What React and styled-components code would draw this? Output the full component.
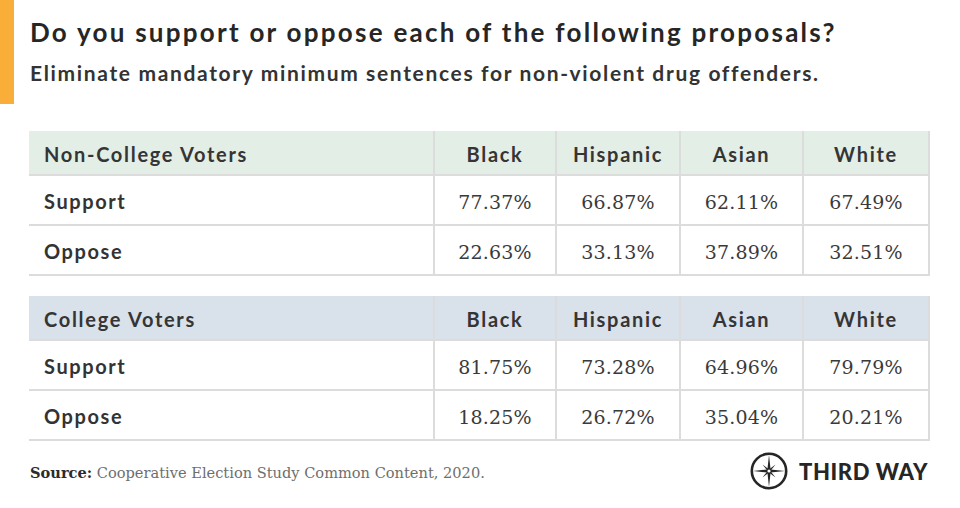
import React from "react";
import styled, { createGlobalStyle } from "styled-components";

const GlobalStyle = createGlobalStyle`
  html, body {
    margin: 0;
    padding: 0;
    background: #ffffff;
  }
  body {
    font-family: "Lato", "Liberation Sans", sans-serif;
    color: #2e2e2e;
  }
`;

const Page = styled.div`
  width: 960px;
  height: 508px;
  overflow: hidden;
  background: #ffffff;
`;

const Header = styled.header`
  display: flex;
  height: 104px;
`;

const Accent = styled.div`
  width: 14px;
  height: 104px;
  background: #f9ae3a;
  flex-shrink: 0;
`;

const Titles = styled.div`
  display: flex;
  flex-direction: column;
  padding: 17px 0 0 16px;
`;

const Title = styled.h1`
  margin: 0;
  font-size: 26px;
  line-height: 30px;
  font-weight: 700;
  letter-spacing: 2.25px;
  color: #262626;
  white-space: nowrap;
`;

const Subtitle = styled.h2`
  margin: 14px 0 0;
  font-size: 21px;
  line-height: 24px;
  font-weight: 700;
  letter-spacing: 1.65px;
  color: #333333;
  white-space: nowrap;
`;

const Content = styled.div`
  display: flex;
  flex-direction: column;
  gap: 20px;
  padding: 27px 30px 0 29px;
`;

const Table = styled.div`
  display: grid;
  grid-template-columns: 404px 122px 124px 123px 128px;
  grid-template-rows: 45px 50px 50px;
`;

const Cell = styled.div`
  display: flex;
  align-items: center;
  justify-content: ${(p) => (p.$first ? "flex-start" : "center")};
  padding-left: ${(p) => (p.$first ? "15px" : "0")};
  box-sizing: border-box;
  border-bottom: 2px solid #dcdcdc;
  border-left: ${(p) => (p.$first ? "none" : "2px solid #dcdcdc")};
  border-right: ${(p) => (p.$last ? "2px solid #dcdcdc" : "none")};
  background: ${(p) => p.$bg || "#ffffff"};
`;

const HeadText = styled.span`
  font-size: 20px;
  font-weight: 700;
  letter-spacing: 1.7px;
  color: #353535;
  padding-top: 3px;
`;

const RowLabel = styled.span`
  font-size: 20px;
  font-weight: 700;
  letter-spacing: 1.6px;
  color: #333333;
  padding-top: 2px;
`;

const Value = styled.span`
  font-family: "DejaVu Serif", "Liberation Serif", serif;
  font-size: 19px;
  letter-spacing: 0.2px;
  color: #3a3a3a;
  padding-top: 4px;
`;

const Footer = styled.footer`
  display: flex;
  align-items: center;
  justify-content: space-between;
  padding: 11px 30px 0 30px;
`;

const Source = styled.p`
  margin: 0;
  font-family: "DejaVu Serif", "Liberation Serif", serif;
  font-size: 14.6px;
  color: #6e6e6e;
  padding-top: 2px;
  b {
    color: #2b2b2b;
    font-weight: 700;
  }
`;

const Logo = styled.div`
  display: flex;
  align-items: center;
  gap: 11px;
  margin-right: 2px;
`;

const LogoText = styled.span`
  font-family: "Lato", "Liberation Sans", sans-serif;
  font-size: 22px;
  font-weight: 900;
  letter-spacing: 0.6px;
  color: #262626;
`;

const groups = [
  {
    label: "Non-College Voters",
    bg: "#e3eee6",
    rows: [
      ["Support", "77.37%", "66.87%", "62.11%", "67.49%"],
      ["Oppose", "22.63%", "33.13%", "37.89%", "32.51%"],
    ],
  },
  {
    label: "College Voters",
    bg: "#d9e1ea",
    rows: [
      ["Support", "81.75%", "73.28%", "64.96%", "79.79%"],
      ["Oppose", "18.25%", "26.72%", "35.04%", "20.21%"],
    ],
  },
];

const columns = ["Black", "Hispanic", "Asian", "White"];

function Compass() {
  return (
    <svg width="38" height="38" viewBox="0 0 38 38">
      <circle cx="19" cy="19" r="17.2" fill="none" stroke="#262626" strokeWidth="2.6" />
      <polygon
        points="19,3 20.6,17.4 35,19 20.6,20.6 19,35 17.4,20.6 3,19 17.4,17.4"
        fill="#262626"
      />
      <polygon
        points="25.5,12.5 20.4,19 25.5,25.5 19,20.4 12.5,25.5 17.6,19 12.5,12.5 19,17.6"
        fill="#262626"
      />
      <circle cx="19" cy="19" r="1.6" fill="#ffffff" />
    </svg>
  );
}

function VoterTable({ group }) {
  return (
    <Table>
      <Cell $first $bg={group.bg}>
        <HeadText>{group.label}</HeadText>
      </Cell>
      {columns.map((c, i) => (
        <Cell key={c} $bg={group.bg} $last={i === columns.length - 1}>
          <HeadText>{c}</HeadText>
        </Cell>
      ))}
      {group.rows.map((row) =>
        row.map((v, i) =>
          i === 0 ? (
            <Cell key={row[0] + i} $first>
              <RowLabel>{v}</RowLabel>
            </Cell>
          ) : (
            <Cell key={row[0] + i} $last={i === row.length - 1}>
              <Value>{v}</Value>
            </Cell>
          )
        )
      )}
    </Table>
  );
}

export default function App() {
  return (
    <Page>
      <GlobalStyle />
      <Header>
        <Accent />
        <Titles>
          <Title>Do you support or oppose each of the following proposals?</Title>
          <Subtitle>
            Eliminate mandatory minimum sentences for non-violent drug offenders.
          </Subtitle>
        </Titles>
      </Header>
      <Content>
        {groups.map((g) => (
          <VoterTable key={g.label} group={g} />
        ))}
      </Content>
      <Footer>
        <Source>
          <b>Source:</b> Cooperative Election Study Common Content, 2020.
        </Source>
        <Logo>
          <Compass />
          <LogoText>THIRD WAY</LogoText>
        </Logo>
      </Footer>
    </Page>
  );
}
